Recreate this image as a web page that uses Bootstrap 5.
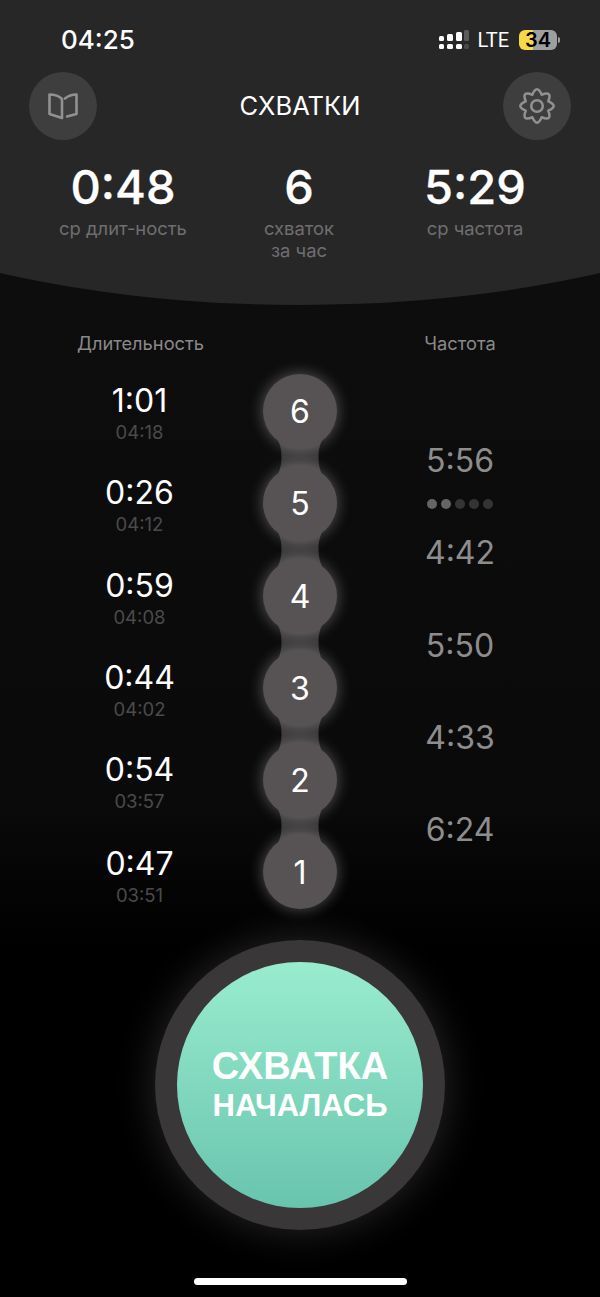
<!DOCTYPE html>
<html lang="ru">
  <head>
    <meta charset="UTF-8" />
    <meta name="viewport" content="width=device-width, initial-scale=1.0" />
    <title>Схватки</title>
    <link href="https://cdn.jsdelivr.net/npm/bootstrap@5.3.3/dist/css/bootstrap.min.css" rel="stylesheet" />
    <style>
      html, body { height: 1297px; overflow: hidden; }
      body {
        background: linear-gradient(#0e0d0e 300px, #0b0a0b 800px, #000 950px);
        font-family: Inter, "Liberation Sans", sans-serif;
        color: #fff;
      }
      .top-sheet {
        height: 305px;
        background: #282728;
        padding-top: 25px;
        clip-path: ellipse(600px 239px at 50% 66px);
      }
      .status-row { height: 30px; padding: 0 40px 0 61px; }
      .status-time { font-size: 26px; font-weight: 500; line-height: 30px; }
      .status-lte { font-family: Roboto, sans-serif; font-size: 20px; line-height: 30px; margin: 0 10px 0 8px; }
      .batt {
        width: 38px; height: 20px; border-radius: 6px;
        background: linear-gradient(90deg, #f6d84a 37%, #a09fa0 37%);
        color: #000; font-size: 20px; font-weight: 600; line-height: 20px; text-align: center;
      }
      .batt-nub { width: 2px; height: 6px; background: #a09fa0; border-radius: 0 2px 2px 0; margin-left: 1px; }
      .nav-row { margin-top: 17px; padding: 0 29px; }
      .round-btn { width: 68px; height: 68px; background: #3f3e3f; }
      .page-title { font-size: 25.500px; line-height: 30px; }
      .stats-row { margin-top: 22px; padding: 0 37px 0 35px; }
      .stat-num { font-size: 47px; font-weight: 500; line-height: 50px; -webkit-text-stroke: .3px #fff; }
      .stat-label { font-size: 18.400px; line-height: 22px; color: #6f6e6f; margin-top: 5px; }
      .track {
        display: grid;
        grid-template-columns: 263px 74px 263px;
      }
      .track-heads { margin-top: 26px; height: 43px; font-size: 18.300px; line-height: 24px; color: #8a898a; }
      .track-heads .side-l { padding-left: 18px; }
      .side-l { padding-left: 16px; text-align: center; }
      .side-r { padding-right: 17px; text-align: center; }
      .lap { height: 92.3px; padding-top: 7px; }
      .lap:last-child { padding-top: 8.500px; }
      .lap-val { font-size: 32px; line-height: 40px; }
      .lap-time { font-size: 18.500px; line-height: 22px; color: #4b4a4b; }
      .freq-list { padding-top: 67px; color: #8e8d8e; font-size: 32px; line-height: 40px; }
      .freq-item { height: 92.3px; }
      .rest-dots { margin-top: 18px; }
      .rest-dots i { width: 10px; height: 10px; border-radius: 50%; background: #353435; }
      .rest-dots i.on { background: #666566; }
      .bead {
        width: 74px; height: 74px; padding-top: 2px; background: #575354; font-size: 32px;
        box-shadow: 0 0 15px rgba(255, 255, 255, .32);
        position: relative; z-index: 1;
      }
      .neck { display: block; margin: -8px 0; height: 34.3px; }
      .start-ring {
        width: 290px; height: 290px; margin-top: 12px; background: #393738;
        box-shadow: 0 0 40px rgba(255, 255, 255, .16);
      }
      .start-btn {
        width: 246px; height: 246px; padding: 0; border: 0;
        background: linear-gradient(#99ecce, #69c4ae); color: #fff;
        font-family: "Liberation Sans", sans-serif; font-weight: 700;
      }
      .start-a { font-size: 38px; line-height: 42px; }
      .start-b { font-size: 31px; line-height: 38px; }
      .home-bar { width: 213px; height: 7px; margin-top: 48px; background: #fff; }
    </style>
  </head>

  <body>
    <header class="top-sheet">
      <div class="status-row d-flex justify-content-between align-items-center">
        <span class="status-time">04:25</span>
        <div class="d-flex align-items-center">
          <svg width="31" height="20" viewBox="0 0 31 20" fill="#fff">
            <rect x="0" y="6" width="5" height="5" rx="1.5" />
            <rect x="0" y="14" width="5" height="5" rx="1.5" />
            <rect x="8" y="4" width="6" height="7" rx="1.5" />
            <rect x="8" y="14" width="6" height="5" rx="1.5" />
            <rect x="17" y="2" width="6" height="9" rx="1.5" />
            <rect x="17" y="14" width="6" height="5" rx="1.5" />
            <rect x="25" y="0" width="5" height="11" rx="1.5" fill="#5d5c5d" />
            <rect x="25" y="14" width="5" height="5" rx="1.5" fill="#4a494a" />
          </svg>
          <span class="status-lte">LTE</span>
          <div class="batt">34</div>
          <div class="batt-nub"></div>
        </div>
      </div>

      <div class="nav-row d-flex justify-content-between align-items-center">
        <div class="round-btn rounded-circle d-flex align-items-center justify-content-center">
          <svg width="32" height="29" viewBox="0 0 32 29" fill="none" stroke="#929192" stroke-width="2.6" stroke-linejoin="round" stroke-linecap="round">
            <path d="M15 7C12 4 7 2.500 2.500 2.500V22L15 26Z" />
            <path d="M18 6.500C21 4 25 2.500 29.500 2.500V22L20 24.500" />
          </svg>
        </div>
        <div class="page-title">СХВАТКИ</div>
        <div class="round-btn rounded-circle d-flex align-items-center justify-content-center">
          <svg width="40" height="40" viewBox="-18 -18 36 36" fill="none" stroke="#929192" stroke-width="2.300" stroke-linejoin="round">
            <path d="M10.160 -4.210Q19.840 0 10.160 4.210Q14.030 14.030 4.210 10.160Q0 19.840 -4.210 10.160Q-14.030 14.030 -10.160 4.210Q-19.840 0 -10.160 -4.210Q-14.030 -14.030 -4.210 -10.160Q0 -19.840 4.210 -10.160Q14.030 -14.030 10.160 -4.210Z" />
            <circle r="5.200" />
          </svg>
        </div>
      </div>

      <div class="stats-row row g-0 text-center">
        <div class="col-4">
          <div class="stat-num">0:48</div>
          <div class="stat-label">ср длит-ность</div>
        </div>
        <div class="col-4">
          <div class="stat-num">6</div>
          <div class="stat-label">схваток<br />за час</div>
        </div>
        <div class="col-4">
          <div class="stat-num">5:29</div>
          <div class="stat-label">ср частота</div>
        </div>
      </div>
    </header>

    <div class="track track-heads">
      <div class="side-l">Длительность</div>
      <div></div>
      <div class="side-r">Частота</div>
    </div>

    <main class="track">
      <div class="side-l">
        <div class="lap"><div class="lap-val">1:01</div><div class="lap-time">04:18</div></div>
        <div class="lap"><div class="lap-val">0:26</div><div class="lap-time">04:12</div></div>
        <div class="lap"><div class="lap-val">0:59</div><div class="lap-time">04:08</div></div>
        <div class="lap"><div class="lap-val">0:44</div><div class="lap-time">04:02</div></div>
        <div class="lap"><div class="lap-val">0:54</div><div class="lap-time">03:57</div></div>
        <div class="lap"><div class="lap-val">0:47</div><div class="lap-time">03:51</div></div>
      </div>

      <div>
        <div class="bead rounded-circle d-flex align-items-center justify-content-center">6</div>
        <svg class="neck" width="74" viewBox="0 0 74 34" preserveAspectRatio="none" fill="#3b393a"><path d="M15 0C18 7 18.500 12 18.500 17C18.500 22 18 27 15 34H59C56 27 55.500 22 55.500 17C55.500 12 56 7 59 0Z" /></svg>
        <div class="bead rounded-circle d-flex align-items-center justify-content-center">5</div>
        <svg class="neck" width="74" viewBox="0 0 74 34" preserveAspectRatio="none" fill="#3b393a"><path d="M15 0C18 7 18.500 12 18.500 17C18.500 22 18 27 15 34H59C56 27 55.500 22 55.500 17C55.500 12 56 7 59 0Z" /></svg>
        <div class="bead rounded-circle d-flex align-items-center justify-content-center">4</div>
        <svg class="neck" width="74" viewBox="0 0 74 34" preserveAspectRatio="none" fill="#3b393a"><path d="M15 0C18 7 18.500 12 18.500 17C18.500 22 18 27 15 34H59C56 27 55.500 22 55.500 17C55.500 12 56 7 59 0Z" /></svg>
        <div class="bead rounded-circle d-flex align-items-center justify-content-center">3</div>
        <svg class="neck" width="74" viewBox="0 0 74 34" preserveAspectRatio="none" fill="#3b393a"><path d="M15 0C18 7 18.500 12 18.500 17C18.500 22 18 27 15 34H59C56 27 55.500 22 55.500 17C55.500 12 56 7 59 0Z" /></svg>
        <div class="bead rounded-circle d-flex align-items-center justify-content-center">2</div>
        <svg class="neck" width="74" viewBox="0 0 74 34" preserveAspectRatio="none" fill="#3b393a"><path d="M15 0C18 7 18.500 12 18.500 17C18.500 22 18 27 15 34H59C56 27 55.500 22 55.500 17C55.500 12 56 7 59 0Z" /></svg>
        <div class="bead rounded-circle d-flex align-items-center justify-content-center">1</div>
      </div>

      <div class="side-r freq-list">
        <div class="freq-item">
          5:56
          <div class="rest-dots d-flex justify-content-center gap-1"><i class="on"></i><i class="on"></i><i></i><i></i><i></i></div>
        </div>
        <div class="freq-item">4:42</div>
        <div class="freq-item">5:50</div>
        <div class="freq-item">4:33</div>
        <div class="freq-item">6:24</div>
      </div>
    </main>

    <div class="start-ring rounded-circle d-flex align-items-center justify-content-center mx-auto">
      <button class="start-btn rounded-circle" type="button">
        <div class="start-a">СХВАТКА</div>
        <div class="start-b">НАЧАЛАСЬ</div>
      </button>
    </div>

    <div class="home-bar rounded-pill mx-auto"></div>

    <script src="https://cdn.jsdelivr.net/npm/bootstrap@5.3.3/dist/js/bootstrap.bundle.min.js"></script>
  </body>
</html>
